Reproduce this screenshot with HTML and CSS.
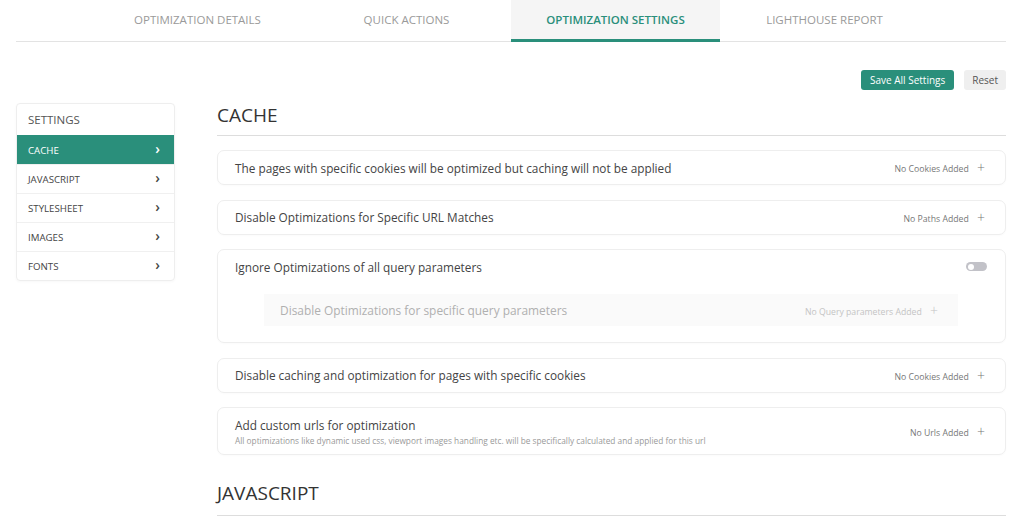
FILE: index.html
```html
<!DOCTYPE html>
<html lang="en">
<head>
    <meta charset="UTF-8">
    <meta name="viewport" content="width=device-width, initial-scale=1.0">
    <title>Optimization Settings</title>
    <link rel="stylesheet" href="styles.css">
</head>
<body>
    <div class="container">
        <nav class="tabs">
            <a class="tab">Optimization Details</a>
            <a class="tab">Quick Actions</a>
            <a class="tab active">Optimization Settings</a>
            <a class="tab">Lighthouse Report</a>
        </nav>

        <div class="toolbar">
            <button class="btn btn-primary">Save All Settings</button>
            <button class="btn btn-light">Reset</button>
        </div>

        <div class="layout">
            <aside class="sidebar">
                <div class="sidebar-title">Settings</div>
                <a class="side-item active">Cache <span class="chev">&#8250;</span></a>
                <a class="side-item">Javascript <span class="chev">&#8250;</span></a>
                <a class="side-item">Stylesheet <span class="chev">&#8250;</span></a>
                <a class="side-item">Images <span class="chev">&#8250;</span></a>
                <a class="side-item">Fonts <span class="chev">&#8250;</span></a>
            </aside>

            <main class="main">
                <h2 class="section-title">Cache</h2>

                <div class="card">
                    <div class="card-row">
                        <span class="card-title">The pages with specific cookies will be optimized but caching will not be applied</span>
                        <span class="meta">No Cookies Added <span class="plus">+</span></span>
                    </div>
                </div>

                <div class="card">
                    <div class="card-row">
                        <span class="card-title">Disable Optimizations for Specific URL Matches</span>
                        <span class="meta">No Paths Added <span class="plus">+</span></span>
                    </div>
                </div>

                <div class="card">
                    <div class="card-row">
                        <span class="card-title">Ignore Optimizations of all query parameters</span>
                        <span class="toggle"><span class="knob"></span></span>
                    </div>
                    <div class="sub-box">
                        <span class="sub-title">Disable Optimizations for specific query parameters</span>
                        <span class="meta faded">No Query parameters Added <span class="plus">+</span></span>
                    </div>
                </div>

                <div class="card">
                    <div class="card-row">
                        <span class="card-title">Disable caching and optimization for pages with specific cookies</span>
                        <span class="meta">No Cookies Added <span class="plus">+</span></span>
                    </div>
                </div>

                <div class="card">
                    <div class="card-row tall">
                        <div>
                            <div class="card-title">Add custom urls for optimization</div>
                            <div class="card-desc">All optimizations like dynamic used css, viewport images handling etc. will be specifically calculated and applied for this url</div>
                        </div>
                        <span class="meta">No Urls Added <span class="plus">+</span></span>
                    </div>
                </div>

                <h2 class="section-title next">Javascript</h2>
            </main>
        </div>
    </div>
</body>
</html>
```

FILE: styles.css
```css
* {
    margin: 0;
    padding: 0;
    box-sizing: border-box;
}

body {
    font-family: 'Open Sans', 'Liberation Sans', sans-serif;
    background: white;
    color: #444;
    overflow: hidden;
}

.container {
    padding: 0 18px 0 16px;
}

.tabs {
    display: flex;
    justify-content: center;
    border-bottom: 1px solid #e3e3e3;
    height: 42px;
}

.tab {
    width: 209px;
    text-align: center;
    text-transform: uppercase;
    font-size: 11.5px;
    line-height: 39px;
    color: #9a9a9a;
    cursor: pointer;
}

.tab.active {
    background: #f5f5f5;
    color: #2a8f7b;
    font-weight: 600;
    border-bottom: 3px solid #2a8f7b;
    height: 42px;
}

.toolbar {
    display: flex;
    justify-content: flex-end;
    gap: 10px;
    margin-top: 28px;
}

.btn {
    border: none;
    border-radius: 3px;
    height: 20px;
    padding: 0 9px;
    font-family: inherit;
    font-size: 10px;
    cursor: pointer;
}

.btn-primary {
    background: #2a8f7b;
    color: white;
}

.btn-light {
    background: #efefef;
    color: #555;
    padding: 0 8px;
}

.layout {
    display: flex;
    gap: 42px;
    margin-top: 13px;
}

.sidebar {
    width: 159px;
    flex-shrink: 0;
    align-self: flex-start;
    border: 1px solid #eee;
    border-radius: 4px;
    box-shadow: 0 1px 3px rgba(0,0,0,0.03);
}

.sidebar-title {
    text-transform: uppercase;
    font-size: 11.5px;
    color: #555;
    padding: 0 11px;
    line-height: 31px;
}

.side-item {
    display: flex;
    justify-content: space-between;
    align-items: center;
    height: 29px;
    padding: 0 14px 0 11px;
    text-transform: uppercase;
    font-size: 9.7px;
    color: #444;
    border-top: 1px solid #f0f0f0;
    cursor: pointer;
}

.side-item.active {
    background: #2a8f7b;
    color: white;
    border-top-color: #2a8f7b;
}

.chev {
    font-size: 14px;
    font-weight: 600;
    line-height: 1;
    margin-top: -2px;
}

.main {
    flex: 1;
    min-width: 0;
}

.section-title {
    font-size: 19px;
    font-weight: 400;
    text-transform: uppercase;
    color: #333;
    line-height: 20px;
    padding: 2px 0 10px 0;
    border-bottom: 1px solid #ddd;
    margin-bottom: 14px;
}

.section-title.next {
    margin-top: 26px;
    padding-bottom: 12px;
}

.card {
    border: 1px solid #eee;
    border-radius: 7px;
    margin-bottom: 14.6px;
    box-shadow: 0 1px 2px rgba(0,0,0,0.02);
}

.card-row {
    display: flex;
    justify-content: space-between;
    align-items: center;
    height: 33px;
    padding: 0 20px 0 17px;
}

.card-row.tall {
    height: 46px;
}

.card-title {
    font-size: 11.8px;
    color: #444;
}

.card-desc {
    font-size: 8.3px;
    color: #999;
    margin-top: 2px;
}

.meta {
    font-size: 8.7px;
    color: #777;
    white-space: nowrap;
}

.meta.faded {
    color: #c4c4c4;
}

.plus {
    font-size: 14px;
    font-weight: 300;
    margin-left: 6px;
    vertical-align: -1px;
}

.toggle {
    width: 21px;
    height: 9px;
    border-radius: 5px;
    background: #c2c2c8;
    display: flex;
    align-items: center;
    padding-left: 2px;
    margin-right: -2px;
}

.knob {
    width: 6px;
    height: 6px;
    border-radius: 50%;
    background: white;
}

.sub-box {
    display: flex;
    justify-content: space-between;
    align-items: center;
    height: 32px;
    margin: 11px 47px 16px 46px;
    padding: 0 20px 0 16px;
    background: #fafafa;
}

.sub-title {
    font-size: 11.9px;
    color: #b0b0b0;
}
```
